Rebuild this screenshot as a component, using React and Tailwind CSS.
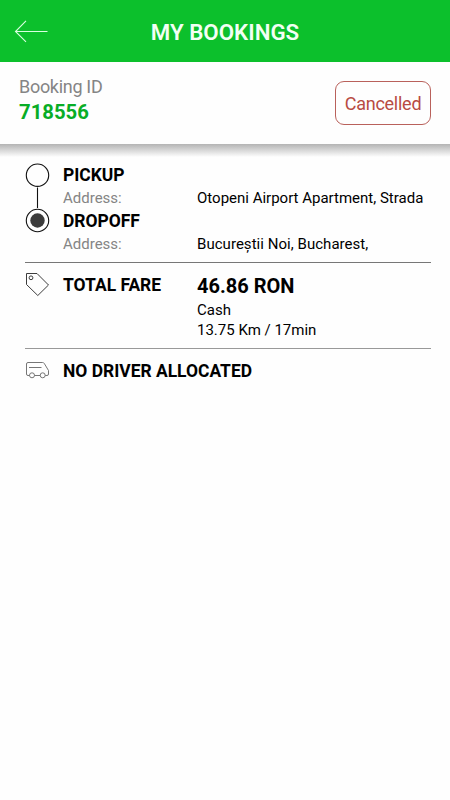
function BackArrow() {
  return (
    <svg className="h-6 w-9" viewBox="0 0 36 24" fill="none" stroke="#d9ffe0" strokeWidth="1.1">
      <path d="M34.5 11.5H2.5M13 0.8L2.5 11.5L13 21.8" />
    </svg>
  );
}

function RouteMarkers() {
  return (
    <svg className="h-[70px] w-[25px]" viewBox="0 0 25 70" fill="none" stroke="#111111" strokeWidth="1.1">
      <circle cx="12.5" cy="12.2" r="11.2" />
      <path d="M12.5 24.5V45" />
      <circle cx="12.5" cy="57.5" r="11.2" />
      <circle cx="12.5" cy="57.5" r="7.2" fill="#3b3b3b" stroke="none" />
    </svg>
  );
}

function TagIcon() {
  return (
    <svg className="h-[25px] w-[25px]" viewBox="0 0 25 25" fill="none" stroke="#333333" strokeWidth="0.95">
      <path d="M1.5 1.5H12L23.5 13L12.8 23.5L1.5 12.5Z" />
      <circle cx="6" cy="5.8" r="1.9" />
    </svg>
  );
}

function VanIcon() {
  return (
    <svg className="h-[18px] w-[25px]" viewBox="0 0 25 18" fill="none" stroke="#666666" strokeWidth="0.9">
      <path d="M4.5 13.5H3Q1.5 13.5 1.5 12V2Q1.5 0.5 3 0.5H17.5Q18.7 0.5 19.3 1.5L23.5 8.5V12Q23.5 13.5 22 13.5H20.3M9.5 13.5H15.2M4 5.5H16.5" />
      <circle cx="7" cy="13.3" r="2.5" />
      <circle cx="17.7" cy="13.3" r="2.5" />
    </svg>
  );
}

export default function App() {
  return (
    <div className="flex h-[800px] w-[450px] flex-col overflow-hidden bg-[#fefefe] font-['Roboto','Liberation_Sans',sans-serif] text-black">
      <header className="grid h-[62px] shrink-0 grid-cols-[50px_1fr_50px] items-center bg-[#0cc02c] pt-0.5 pl-[13px] pr-[13px]">
        <BackArrow />
        <h1 className="text-center text-[22.3px] leading-6 font-semibold text-[#f3fff4]">MY BOOKINGS</h1>
      </header>

      <section className="flex h-[82px] shrink-0 items-start justify-between bg-[#fefefe] pl-[19px] pr-[19px]">
        <div className="pt-[13px]">
          <div className="text-[18px] leading-6 tracking-[-0.3px] text-[#858585]">Booking ID</div>
          <div className="text-[20.3px] leading-[26px] font-bold text-[#08ad26]">718556</div>
        </div>
        <div className="mt-[19px] flex h-11 w-24 items-center justify-center rounded-[9px] border border-[#b9615b] text-[18px] tracking-[-0.25px] text-[#b84b43]">
          Cancelled
        </div>
      </section>
      <div className="h-[13px] shrink-0 bg-linear-to-b from-[#b4b4b4] to-[#fefefe]" />

      <main className="pl-[25px] pr-[19px]">
        <section className="flex h-[105px] pt-[6px]">
          <RouteMarkers />
          <div className="grid flex-1 grid-cols-[134px_1fr] grid-rows-[23px_23px_23px_23px] items-center pt-px pl-[13px] text-[15px]">
            <h2 className="col-span-2 text-[17.45px] font-bold">PICKUP</h2>
            <span className="text-[#858585]">Address:</span>
            <span className="whitespace-nowrap">Otopeni Airport Apartment, Strada</span>
            <h2 className="col-span-2 text-[17.45px] font-bold">DROPOFF</h2>
            <span className="text-[#858585]">Address:</span>
            <span className="tracking-[0.04px]">Bucureștii Noi, Bucharest,</span>
          </div>
        </section>

        <section className="flex h-[86px] border-t border-[#777777] pt-[9px]">
          <TagIcon />
          <h2 className="w-[147px] pt-px pl-[13px] text-[17.45px] leading-6 font-bold">TOTAL FARE</h2>
          <div className="text-[15px] leading-5">
            <div className="pt-px pb-px text-[20px] leading-[26px] font-bold">46.86 RON</div>
            <div>Cash</div>
            <div>13.75 Km / 17min</div>
          </div>
        </section>

        <section className="flex border-t border-[#999999] pt-[13px]">
          <VanIcon />
          <h2 className="-mt-[3px] pl-[13px] text-[17.45px] leading-6 font-bold">NO DRIVER ALLOCATED</h2>
        </section>
      </main>
    </div>
  );
}
